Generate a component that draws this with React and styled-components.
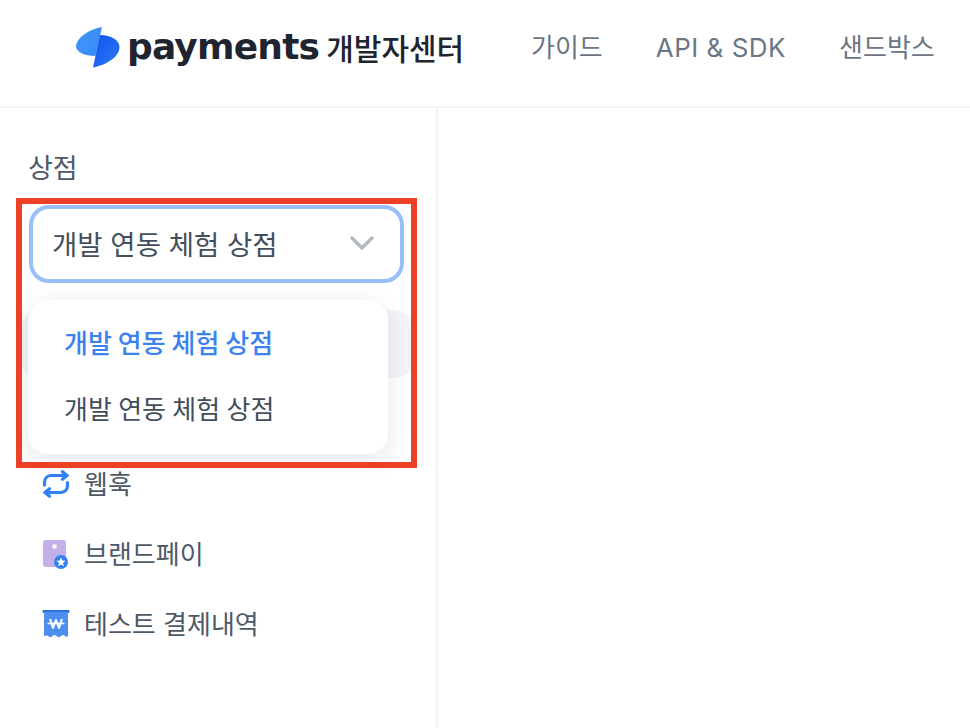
import React from 'react'
import styled, { createGlobalStyle } from "styled-components"

const sans = `Inter, "Noto Sans CJK KR", sans-serif`

const GlobalStyle = createGlobalStyle`
  html, body {
    margin: 0;
    padding: 0;
    background: #fff;
    font-family: ${sans};
    overflow: hidden;
  }
`

const LogoMark = () => (
  <svg width="44" height="41" viewBox="0 0 44 41">
    <defs>
      <linearGradient id="left" x1="0" y1="0" x2="1" y2="0.6">
        <stop offset="0" stopColor="#3f95f7" />
        <stop offset="1" stopColor="#3a8cf8" />
      </linearGradient>
      <linearGradient id="right" x1="0" y1="0" x2="1" y2="1">
        <stop offset="0" stopColor="#0f52ee" />
        <stop offset="1" stopColor="#2d7af6" />
      </linearGradient>
    </defs>
    <path d="M26 0 C14 2 1 10 0 19 C0 25 8 29 19.5 29 Z" fill="url(#left)" />
    <path d="M24 8 C35 8 43.5 13 43.5 20 C43.5 30 30 38 17 40.5 Z" fill="url(#right)" />
  </svg>
)

const WebhookIcon = () => (
  <svg width="28" height="28" viewBox="0 0 28 28" fill="none" stroke="#3182f6" strokeWidth="3.2" strokeLinecap="round" strokeLinejoin="round">
    <path d="M2.5 15 V12.5 C2.5 8 5.5 5.5 9.5 5.5 H25" />
    <path d="M20.5 1.8 L25 5.5 L20.5 9.2" />
    <path d="M25.5 12.5 V15.5 C25.5 20 22.5 22.5 18.5 22.5 H3" />
    <path d="M7.5 18.8 L3 22.5 L7.5 26.2" />
  </svg>
)

const BrandPayIcon = () => (
  <svg width="28" height="30" viewBox="0 0 28 30">
    <rect x="1" y="1" width="23" height="27" rx="3" fill="#c3b0e8" />
    <rect x="10.5" y="5.5" width="4" height="4" rx="0.5" fill="#fff" />
    <circle cx="19" cy="23" r="7" fill="#3182f6" />
    <path d="M19 18.5 L20.3 21.5 L23.5 21.8 L21 24 L21.8 27.2 L19 25.5 L16.2 27.2 L17 24 L14.5 21.8 L17.7 21.5 Z" fill="#fff" />
  </svg>
)

const ReceiptIcon = () => (
  <svg width="28" height="30" viewBox="0 0 28 30">
    <rect x="0.5" y="1" width="27" height="3" rx="1" fill="#2f72dd" />
    <path d="M2 3 H26 V26 C26 28 24.5 28.5 23 27 C21.5 25.5 20.5 25.5 19 27 C17.5 28.5 16 28.5 14.5 27 C13 25.5 12 25.5 10.5 27 C9 28.5 7.5 28.5 6 27 C4.5 25.5 2 28.5 2 26 Z" fill="#4c8ff0" />
    <path d="M8 10 L11 19 L14 11 L17 19 L20 10" fill="none" stroke="#fff" strokeWidth="2" strokeLinejoin="round" />
    <path d="M5.5 14.5 H22.5" stroke="#fff" strokeWidth="1.6" />
  </svg>
)

const navItems = [
  { label: "웹훅", icon: <WebhookIcon /> },
  { label: "브랜드페이", icon: <BrandPayIcon /> },
  { label: "테스트 결제내역", icon: <ReceiptIcon /> },
]

const App = () => {
  return (
    <Page>
      <GlobalStyle />
      <Header>
        <Logo>
          <LogoMark />
          <Wordmark>payments</Wordmark>
          <LogoTitle>개발자센터</LogoTitle>
        </Logo>
        <TopNav>
          <TopLink>가이드</TopLink>
          <TopLink>API &amp; SDK</TopLink>
          <TopLink>샌드박스</TopLink>
        </TopNav>
      </Header>
      <Body>
        <Sidebar>
          <SectionLabel>상점</SectionLabel>
          <SelectArea>
            <Select>
              <span>개발 연동 체험 상점</span>
              <svg width="26" height="16" viewBox="0 0 26 16" fill="none" stroke="#b0b8c1" strokeWidth="3.4" strokeLinecap="round" strokeLinejoin="round">
                <path d="M3 3 L13 13 L23 3" />
              </svg>
            </Select>
            <Dropdown>
              <Option $active>개발 연동 체험 상점</Option>
              <Option>개발 연동 체험 상점</Option>
            </Dropdown>
            <Highlight />
          </SelectArea>
          <NavList>
            <NavItem $selected />
            <NavItem />
            {navItems.map((item) => (
              <NavItem key={item.label}>
                <IconSlot>{item.icon}</IconSlot>
                <NavText>{item.label}</NavText>
              </NavItem>
            ))}
          </NavList>
        </Sidebar>
        <Content />
      </Body>
    </Page>
  )
}

export default App

const Page = styled.div`
  width: 970px;
  height: 728px;
  overflow: hidden;
  background: #fff;
`
const Header = styled.header`
  height: 106px;
  border-bottom: 2px solid #f2f4f6;
  display: flex;
  align-items: center;
  padding-left: 76px;
  white-space: nowrap;
`
const Logo = styled.div`
  display: flex;
  align-items: center;
  width: 455px;
  flex-shrink: 0;
  margin-bottom: 12px;
`
const Wordmark = styled.span`
  margin-left: 7px;
  font-family: "DejaVu Sans", sans-serif;
  font-size: 36px;
  font-weight: 700;
  line-height: 50px;
  letter-spacing: -0.8px;
  color: #1f2530;
`
const LogoTitle = styled.span`
  margin-left: 7px;
  font-size: 30px;
  font-weight: 500;
  color: #1f2530;
`
const TopNav = styled.nav`
  display: flex;
  align-items: center;
  gap: 53px;
  margin-bottom: 10px;
`
const TopLink = styled.a`
  font-size: 26px;
  line-height: 36px;
  font-weight: 400;
  color: #6b7684;
  &:nth-child(2) {
    letter-spacing: 0.5px;
  }
`
const Body = styled.div`
  display: flex;
  height: 620px;
`
const Sidebar = styled.aside`
  width: 438px;
  box-sizing: border-box;
  flex-shrink: 0;
  border-right: 2px solid #f2f4f6;
  padding: 41px 22px 0 28px;
`
const SectionLabel = styled.div`
  font-size: 27px;
  line-height: 40px;
  color: #4e5968;
`
const SelectArea = styled.div`
  position: relative;
  margin-top: 16px;
  z-index: 2;
`
const Select = styled.div`
  box-sizing: border-box;
  width: 375px;
  height: 78px;
  margin-left: 1px;
  padding: 0 25px 3px 19px;
  border: 4px solid #97c0f9;
  border-radius: 20px;
  background: #fff;
  display: flex;
  align-items: center;
  justify-content: space-between;
  font-size: 27.5px;
  color: #434e5c;
`
const Dropdown = styled.div`
  position: absolute;
  top: 95px;
  left: 0;
  width: 360px;
  height: 154px;
  box-sizing: border-box;
  padding: 11px 0;
  border-radius: 20px;
  background: #fff;
  box-shadow: 0 6px 24px rgba(0, 27, 55, 0.1);
  display: flex;
  flex-direction: column;
`
const Option = styled.div`
  height: 66px;
  box-sizing: border-box;
  padding: 0 0 5px 36px;
  display: flex;
  align-items: center;
  font-size: 26px;
  word-spacing: -1px;
  font-weight: ${(props) => (props.$active ? 500 : 400)};
  color: ${(props) => (props.$active ? "#3b82f0" : "#434e5c")};
`
const Highlight = styled.div`
  position: absolute;
  top: -7px;
  left: -12px;
  width: 401px;
  height: 270px;
  box-sizing: border-box;
  border: 6px solid #ec4126;
  pointer-events: none;
`
const NavList = styled.div`
  margin: 27px 0 0 -8px;
  display: flex;
  flex-direction: column;
  gap: 2px;
`
const NavItem = styled.div`
  height: 68px;
  box-sizing: border-box;
  padding-left: 22px;
  display: flex;
  align-items: center;
  gap: 14px;
  border-radius: 20px;
  background: ${(props) => (props.$selected ? "#f2f4f6" : "transparent")};
`
const NavText = styled.span`
  padding-bottom: 4px;
  font-size: 26px;
  color: #4e5968;
`
const IconSlot = styled.span`
  width: 28px;
  height: 30px;
  display: flex;
  align-items: center;
  justify-content: center;
`
const Content = styled.main`
  flex: 1;
`
